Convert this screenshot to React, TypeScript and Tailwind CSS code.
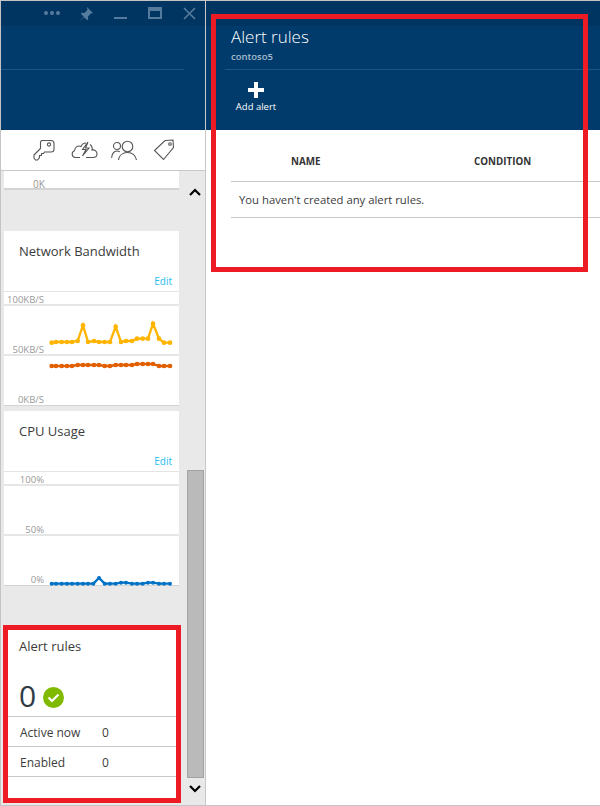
const font = { fontFamily: '"Open Sans", "Noto Sans", sans-serif' };

const yellow = "155,353 168,351 185,351 201,351 216,351 233,348 249,301 264,351 282,348 297,351 314,351 330,351 347,305 363,351 378,348 396,348 411,341 428,341 444,341 459,296 477,341 492,353 510,353";
const orange = "155,423 168,423 185,423 201,423 216,423 233,420 249,420 264,420 282,420 297,420 314,423 330,423 347,420 363,420 378,420 396,420 411,417 428,417 444,417 459,417 477,423 492,423 510,423";
const blue = "155,521 168,521 185,521 201,521 216,521 233,521 249,521 264,521 280,521 297,504 314,521 330,521 347,521 363,518 378,518 396,521 411,521 428,521 444,518 459,518 477,521 492,521 510,521";

const Series = ({ points, color, radius = 7 }: { points: string; color: string; radius?: number }) => (
  <g>
    <polyline points={points} fill="none" stroke={color} strokeWidth="7" />
    {points.split(" ").map((p, i) => {
      const [x, y] = p.split(",");
      return <circle key={i} cx={x} cy={y} r={radius} fill={color} />;
    })}
  </g>
);

const ChartTile = ({ title, labels, children, viewY }: { title: string; labels: string[]; children: React.ReactNode; viewY: number }) => (
  <div className="relative bg-white h-[175px] border-b border-[#d4d4d4]">
    <div className="h-[61px] border-b border-[#e4e4e4] relative">
      <div className="pl-[15px] pt-[10px] text-[13px] leading-[20px] text-[#3c3c3c]">{title}</div>
      <a className="absolute right-[7px] top-[42px] text-[10px] leading-[16px] text-[#27bdf2]">Edit</a>
    </div>
    <div className="h-[14px] border-b-2 border-[#e6e6e6] text-right pr-[135px] text-[9.5px] leading-[16px] text-[#999]">{labels[0]}</div>
    <div className="h-[50px] border-b-2 border-[#e6e6e6] flex items-end justify-end pr-[135px] text-[9.5px] leading-[8px] text-[#999]">{labels[1]}</div>
    <div className="h-[49px] flex items-end justify-end pr-[135px] text-[9.5px] leading-[10px] text-[#999]">{labels[2]}</div>
    <svg className="absolute left-[-4px] top-0 w-[200px] h-[180px]" viewBox={`0 ${viewY} 600 540`}>
      {children}
    </svg>
  </div>
);

const Header = ({ children }: { children?: React.ReactNode }) => (
  <div className="h-[129px] bg-[#003b6b] relative">
    <div className="h-[25px] bg-[#003461]" />
    {children}
  </div>
);

const AlertRow = ({ label }: { label: string }) => (
  <div className="h-[30px] border-b border-[#c8c8c8] flex items-center pt-[3px] pl-[16px] text-[12px] text-[#3c3c3c]">
    <span className="w-[82px]">{label}</span>
    <span>0</span>
  </div>
);

const ToolIcon = ({ children }: { children: React.ReactNode }) => (
  <div className="w-[40px] flex items-center justify-center">{children}</div>
);

export default function App() {
  return (
    <div className="relative w-[600px] h-[806px] bg-white flex overflow-hidden border-t border-l border-b border-[#c4c4c4]" style={font}>
      <div className="w-[205px] h-full flex flex-col border-r border-[#c8c8c8]">
        <Header>
          <div className="absolute left-0 top-[68px] w-[183px] h-px bg-[#1d5582]" />
          <div className="absolute left-[43px] top-[4px] flex gap-[2px] items-center h-[16px]">
            <span className="w-[4px] h-[4px] rounded-full bg-[#557c9e]" />
            <span className="w-[4px] h-[4px] rounded-full bg-[#557c9e]" />
            <span className="w-[4px] h-[4px] rounded-full bg-[#557c9e]" />
          </div>
          <svg className="absolute left-[77px] top-[5px] w-[16px] h-[16px]" viewBox="0 0 16 16">
            <path d="M9 1l6 6-2 .6-3 3 .2 2.6-1 1-3-3-5 4.600 4.600-5-3-3 1-1 2.600.2 3-3z" fill="#557c9e" />
          </svg>
          <div className="absolute left-[113px] top-[16px] w-[13px] h-[2px] bg-[#557c9e]" />
          <div className="absolute left-[147px] top-[6px] w-[14px] h-[12px] border-2 border-t-4 border-[#557c9e]" />
          <svg className="absolute left-[182px] top-[6px] w-[13px] h-[13px]" viewBox="0 0 13 13">
            <path d="M1 1l11 11M12 1L1 12" stroke="#557c9e" strokeWidth="1.600" />
          </svg>
        </Header>
        <div className="h-[41px] bg-white border-b border-[#c8c8c8] flex pl-[23px] pb-[1px]">
          <ToolIcon>
            <svg className="w-[22px] h-[22px]" viewBox="0 0 22 22" fill="none" stroke="#555" strokeWidth="1.100">
              <path d="M8.500 1.500h9.500q3 0 3 3v6q0 2.500-3 2.500h-6.500l-1 1.500H8.500v2H6.500v2l-2 2.500H2.500L1 19v-3l6.500-6.500V3z" />
              <circle cx="16" cy="5.500" r="1.600" />
            </svg>
          </ToolIcon>
          <ToolIcon>
            <svg className="w-[27px] h-[18px]" viewBox="0 0 27 18" fill="none" stroke="#555" strokeWidth="1.100">
              <path d="M9 16.500H4.500a3.500 3.500 0 0 1-1-6.800C4 6 7 4 10 5.500 11 3 13 2 15 2M19 3.500c2 1.500 2.500 3.500 2 5.500 3-.5 5 1.500 5 4 0 2-1.500 3.500-4 3.500h-7" />
              <path d="M17 1l-5.500 7.500h3.500L11.500 15l6.500-8h-3.500z" />
            </svg>
          </ToolIcon>
          <ToolIcon>
            <svg className="w-[26px] h-[20px]" viewBox="0 0 26 20" fill="none" stroke="#555" strokeWidth="1.100">
              <circle cx="6" cy="6" r="3.500" />
              <path d="M.700 18c0-3.500 2-7 5.300-7 1 0 2 .3 2.800.8" />
              <circle cx="16.500" cy="6.500" r="5.300" />
              <path d="M7.500 20c.5-4.500 4-7.500 9-7.500s8 3 9 7.500" />
            </svg>
          </ToolIcon>
          <ToolIcon>
            <svg className="w-[22px] h-[22px]" viewBox="0 0 22 22" fill="none" stroke="#555" strokeWidth="1.100">
              <path d="M12 1.500l8-.5.500 7.500L10.500 20.500 1.500 11.500z" />
              <circle cx="17" cy="5" r="1.300" />
            </svg>
          </ToolIcon>
        </div>
        <div className="flex-1 bg-[#e9e9e9] flex min-h-0">
          <div className="w-[186px] pl-[3px] pr-[8px]">
            <div className="h-[19px] bg-white border-b-2 border-[#d4d4d4] text-[10px] leading-[26px] text-[#999] pl-[29px]">0K</div>
            <div className="h-[41px]" />
            <ChartTile title="Network Bandwidth" labels={["100KB/S", "50KB/S", "0KB/S"]} viewY={18}>
              <Series points={yellow} color="#ffb400" />
              <Series points={orange} color="#e25f00" />
            </ChartTile>
            <div className="h-[5px]" />
            <ChartTile title="CPU Usage" labels={["100%", "50%", "0%"]} viewY={3}>
              <Series points={blue} color="#0072c6" radius={6} />
            </ChartTile>
            <div className="h-[44px]" />
            <div className="bg-white h-[168px] pt-[6px]">
              <div className="pl-[15px] text-[13px] leading-[20px] text-[#3c3c3c]">Alert rules</div>
              <div className="h-[61px] flex items-end gap-[7px] pl-[15px] border-b border-[#c8c8c8]">
                <span className="text-[30px] leading-[40px] text-[#2f3a45]">0</span>
                <svg className="w-[21px] h-[21px] mb-[8px]" viewBox="0 0 21 21">
                  <circle cx="10.500" cy="10.500" r="10.500" fill="#7fba00" />
                  <path d="M5.500 10.500l3.500 3.500 6.500-6.500" fill="none" stroke="#fff" strokeWidth="2.200" />
                </svg>
              </div>
              <AlertRow label="Active now" />
              <AlertRow label="Enabled" />
            </div>
          </div>
          <div className="w-[18px] pr-[1px] relative flex flex-col">
            <svg className="absolute left-[2px] top-[17px] w-[12px] h-[8px]" viewBox="0 0 12 8">
              <path d="M1 7l5-5 5 5" fill="none" stroke="#000" strokeWidth="2.200" />
            </svg>
            <div className="h-[299px]" />
            <div className="h-[308px] bg-[#bababa] border border-[#a3a3a3]" />
            <svg className="absolute left-[2px] bottom-[12px] w-[12px] h-[8px]" viewBox="0 0 12 8">
              <path d="M1 1l5 5 5-5" fill="none" stroke="#000" strokeWidth="2.200" />
            </svg>
          </div>
        </div>
      </div>

      <div className="flex-1 h-full flex flex-col">
        <Header>
          <div className="absolute left-[25px] top-[24px] text-[17px] leading-[24px] font-light text-white">Alert rules</div>
          <div className="absolute left-[25px] top-[50px] text-[9.500px] leading-[12px] font-semibold text-[#a4bbce]">contoso5</div>
          <div className="absolute left-[19px] right-0 top-[68px] h-px bg-[#1d5582]" />
          <div className="absolute left-[30px] top-[81px] flex flex-col items-center w-[40px]">
            <svg className="w-[16px] h-[16px]" viewBox="0 0 16 16">
              <path d="M6 0h4v6h6v4h-6v6H6v-6H0V6h6z" fill="#fff" />
            </svg>
            <span className="text-[9.500px] leading-[18px] font-medium text-white whitespace-nowrap">Add alert</span>
          </div>
        </Header>
        <div className="h-[51px] flex items-end pb-[12px] text-[9.800px] leading-[14px] font-bold text-[#333]">
          <span className="ml-[85px] w-[183px]">NAME</span>
          <span>CONDITION</span>
        </div>
        <div className="ml-[25px] border-t border-b border-[#c8c8c8] h-[37px] flex items-center pl-[8px] pt-[1px] text-[11.300px] text-[#3c3c3c]">
          You haven't created any alert rules.
        </div>
      </div>

      <div className="absolute left-[2px] top-[624px] w-[178px] h-[178px] border-[5px] border-[#ed1c24] pointer-events-none" />
      <div className="absolute left-[210px] top-[13px] w-[377px] h-[258px] border-[5px] border-[#ed1c24] pointer-events-none" />
    </div>
  );
}
